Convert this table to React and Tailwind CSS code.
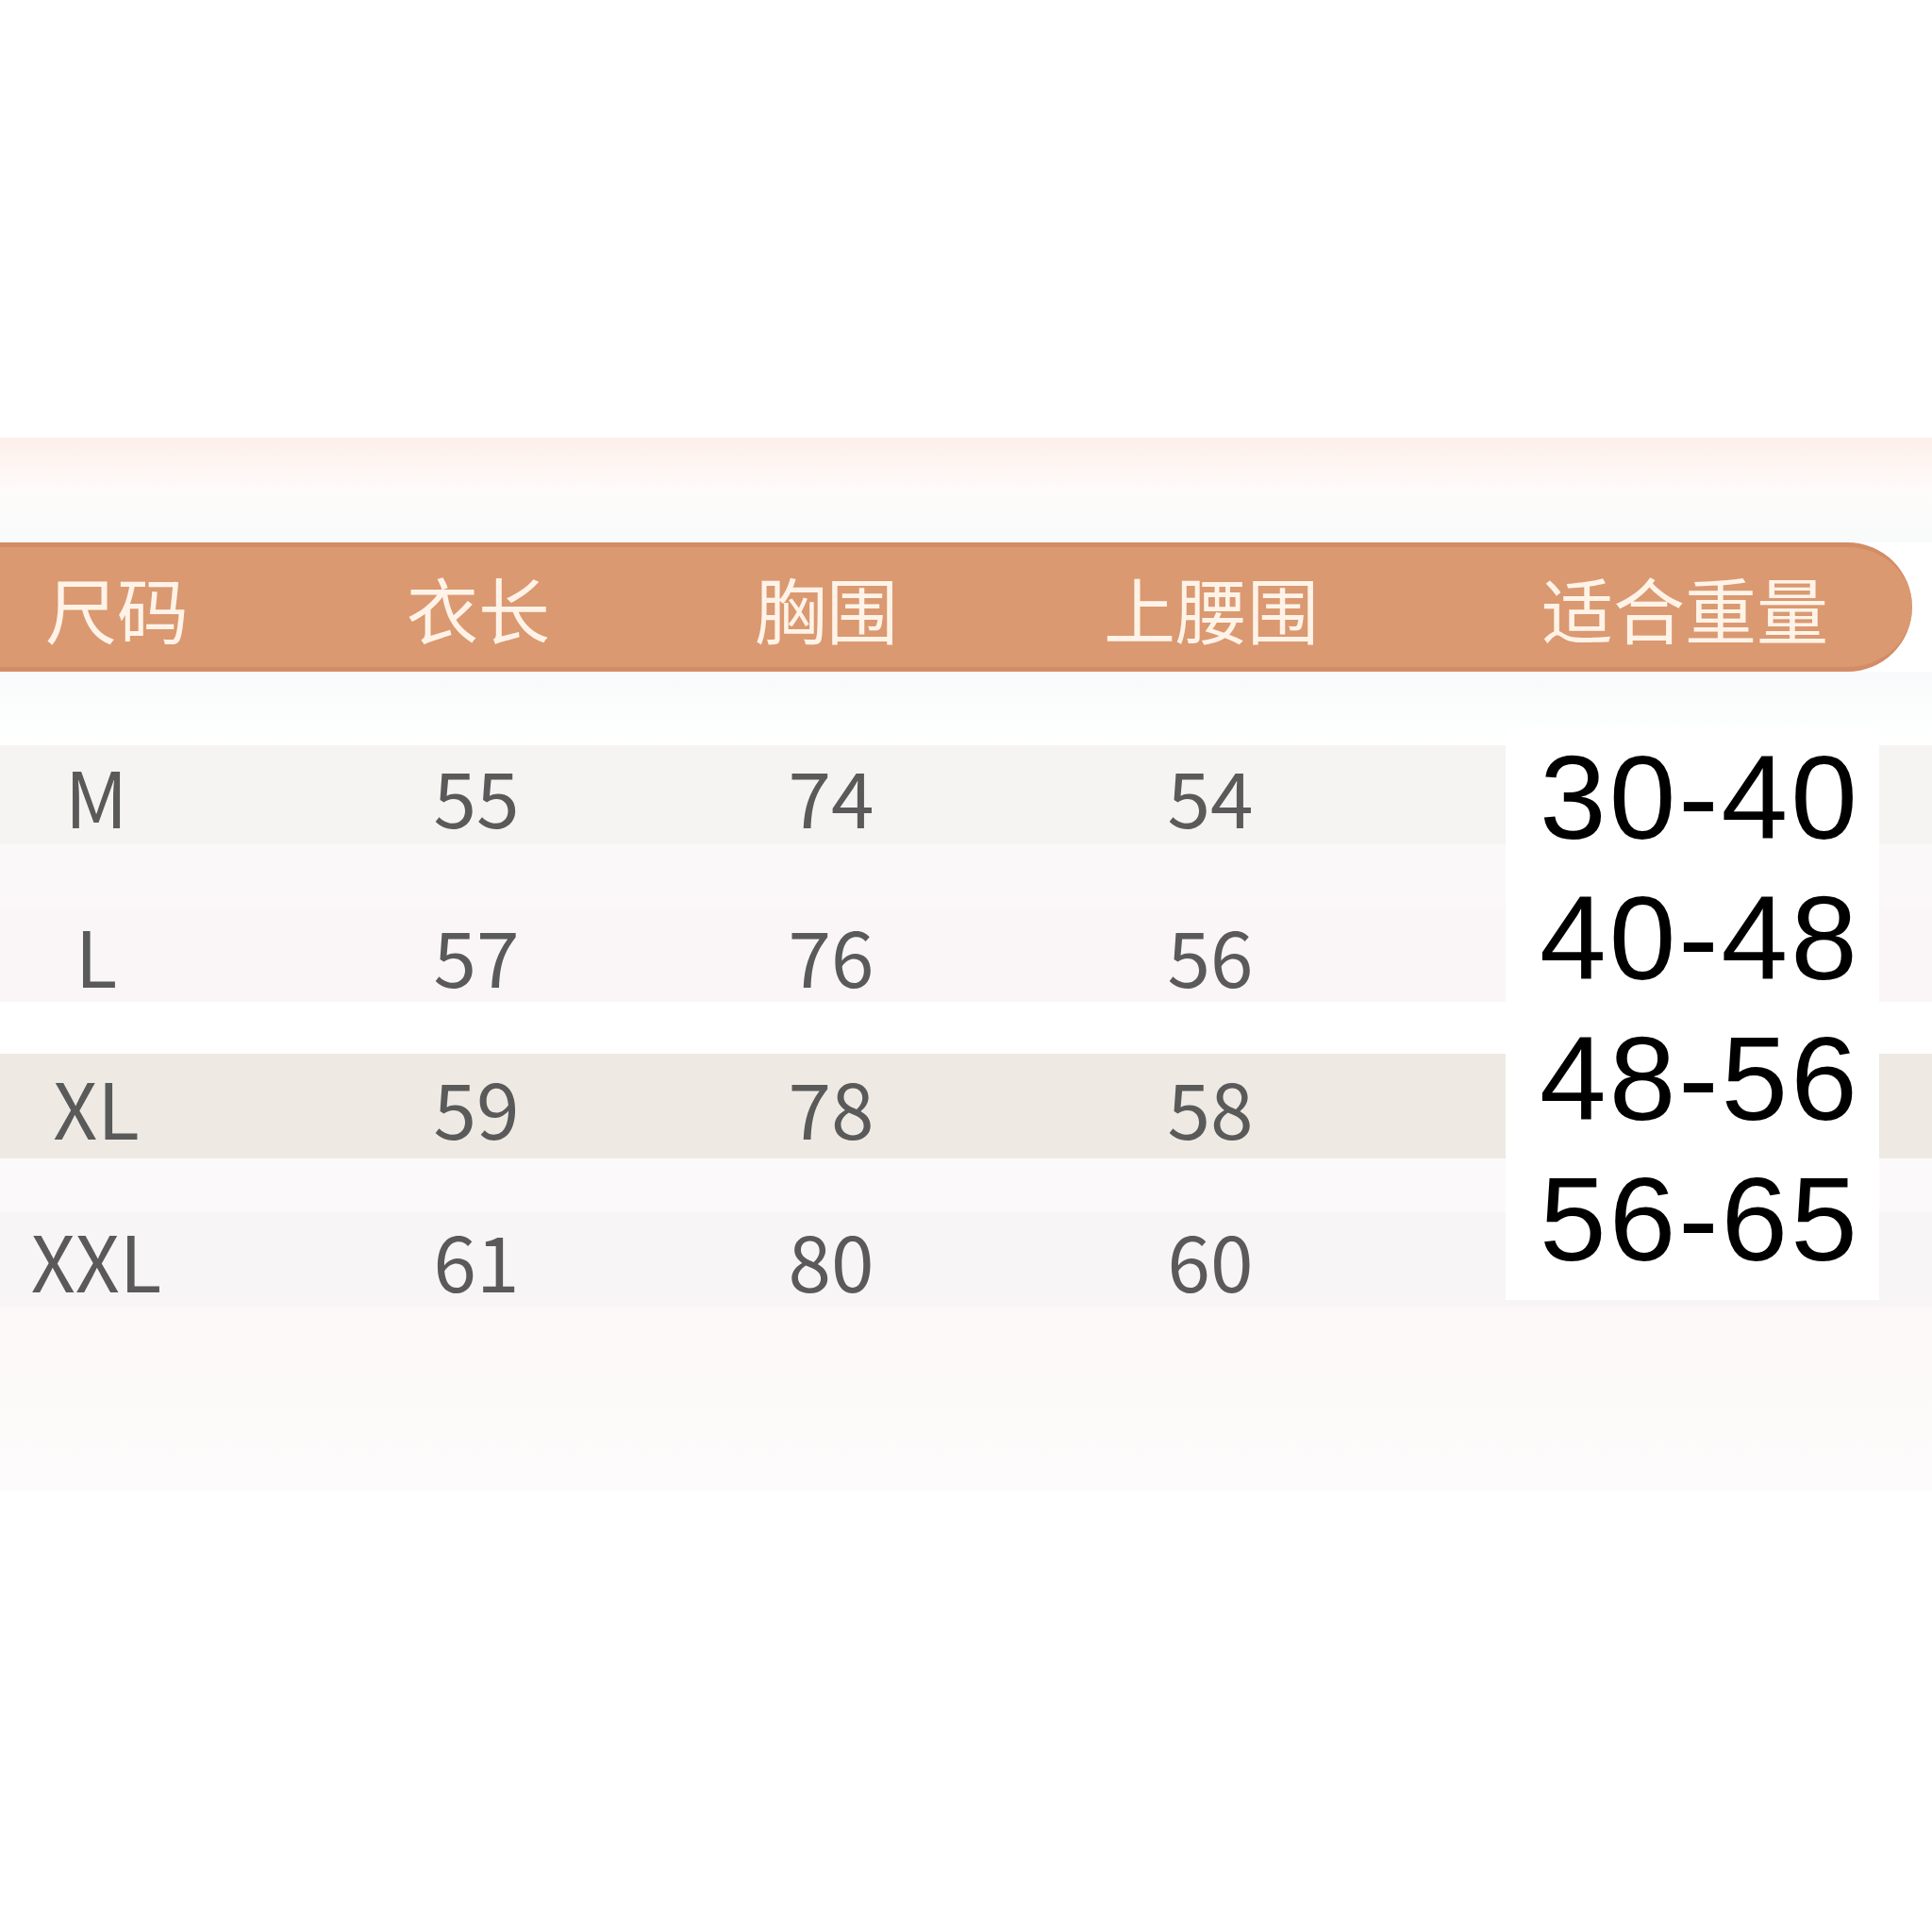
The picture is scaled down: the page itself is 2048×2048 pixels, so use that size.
import React from "react";

const headers = [
    { text: "尺码", cls: "w-[240px] ml-[4px]" },
    { text: "衣长", cls: "w-[240px] ml-[143px]" },
    { text: "胸围", cls: "w-[240px] ml-[129px]" },
    { text: "上腰围", cls: "w-[240px] ml-[168px]" },
    { text: "适合重量", cls: "w-[320px] ml-[222px]" },
];

const rows = [
    { size: "M", vals: ["55", "74", "54"], band: "bg-[#f6f3f3]", h: "h-[105px]", after: "h-[67px] bg-[#faf8f8]" },
    { size: "L", vals: ["57", "76", "56"], band: "bg-[#faf6f7]", h: "h-[100px]", after: "h-[55px] bg-white" },
    { size: "XL", vals: ["59", "78", "58"], band: "bg-[#eeeae3]", h: "h-[111px]", after: "h-[57px] bg-[#fcf9fa]" },
    { size: "XXL", vals: ["61", "80", "60"], band: "bg-[#f8f5f6]", h: "h-[100px]", after: "h-[195px] bg-gradient-to-b from-[#fcf8f8] to-[#fdfbfb]" },
];

const weights = ["30-40", "40-48", "48-56", "56-65"];

function Row({ row }) {
    const cell = "w-[200px] flex justify-center";
    return (
        <>
            <div className={`flex items-center ${row.h} ${row.band} text-[82px] font-normal text-[#5a5a5a] leading-none`}>
                <div className={`${cell} ml-[2px]`}>{row.size}</div>
                <div className={`${cell} ml-[203px]`}>{row.vals[0]}</div>
                <div className={`${cell} ml-[176px]`}>{row.vals[1]}</div>
                <div className={`${cell} ml-[202px]`}>{row.vals[2]}</div>
            </div>
            <div className={row.after} />
        </>
    );
}

export default function App() {
    return (
        <div className="relative w-[2048px] h-[2048px] bg-white overflow-hidden font-['Noto_Sans_CJK_SC','Noto_Sans',sans-serif]">
            <div className="h-[464px]" />
            {/* soft band above header */}
            <div className="h-[111px] bg-gradient-to-b from-[#fdefe9] via-[#fefbfa] to-[#f8fbfb]" />

            {/* Header bar */}
            <div className="w-[2027px] h-[137px] flex items-center bg-[#da9971] rounded-l-[40px] rounded-r-full border-y-[5px] border-[#d38c66] text-[76px] font-normal text-[#fff3e8] leading-none whitespace-nowrap">
                {headers.map((h) => (
                    <div key={h.text} className={`flex justify-center ${h.cls}`}>{h.text}</div>
                ))}
            </div>

            <div className="h-[78px] bg-gradient-to-b from-[#f8fbfb] to-white" />

            {rows.map((r) => (
                <Row key={r.size} row={r} />
            ))}

            {/* weight overlay */}
            <div className="absolute left-[1596px] top-[771px] w-[396px] h-[607px] bg-white pl-[36px] font-['Liberation_Sans',Arial,sans-serif] text-[127px] leading-[149px] tracking-[3px] text-black whitespace-nowrap">
                {weights.map((w) => (
                    <div key={w}>{w}</div>
                ))}
            </div>
        </div>
    );
}
